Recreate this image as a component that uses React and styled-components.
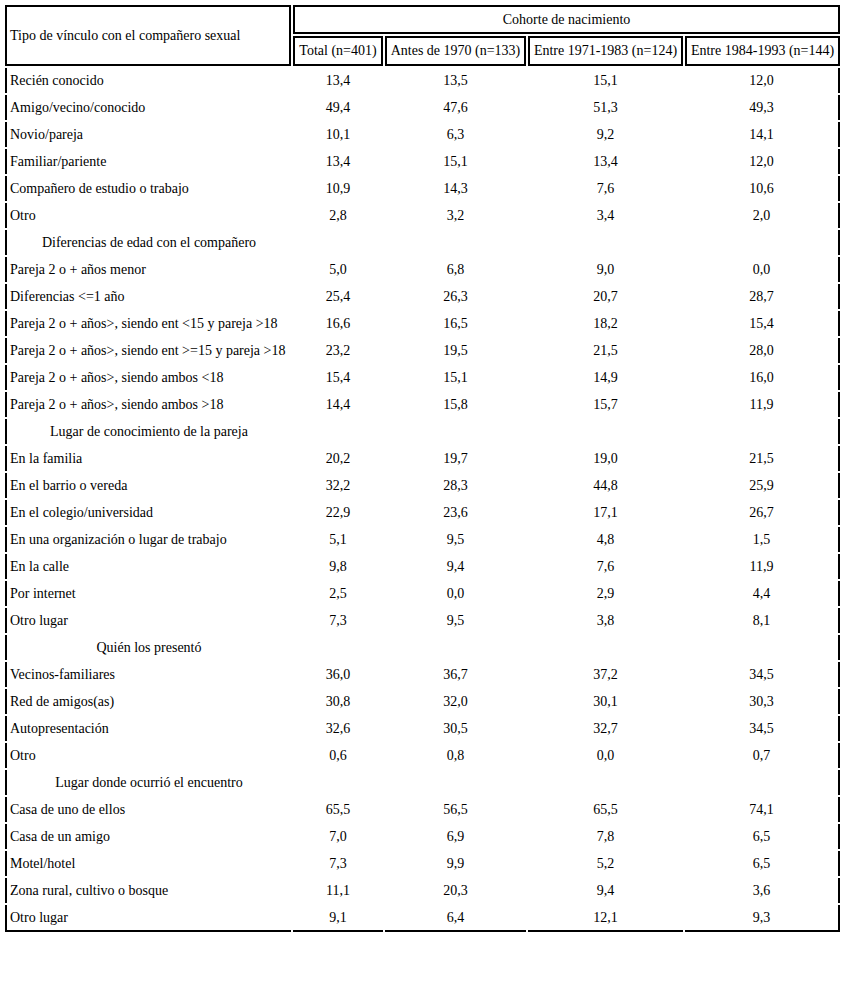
import React from "react";
import styled, { createGlobalStyle } from "styled-components";

const GlobalStyle = createGlobalStyle`
  html, body {
    margin: 0;
    padding: 0;
    background: #ffffff;
  }
  body {
    padding: 3px;
    font-family: "Liberation Serif", "Times New Roman", serif;
    font-size: 14px;
    color: #000000;
  }
`;

const Table = styled.table`
  border-collapse: separate;
  border-spacing: 2px;
  table-layout: fixed;
  width: 839px;
  font-family: "Liberation Serif", "Times New Roman", serif;
  font-size: 14px;
  line-height: 17px;
  color: #000;
`;

const HeadCell = styled.th`
  border: 2px solid #000;
  padding: 4px 3px ${(p) => (p.$sub ? "5px" : "4px")};
  font-weight: normal;
  white-space: nowrap;
  text-align: ${(p) => (p.$left ? "left" : "center")};
  vertical-align: middle;
  overflow: visible;
`;

const BodyCell = styled.td`
  padding: 4px 3px;
  white-space: nowrap;
  overflow: visible;
  text-align: ${(p) => p.$align || "center"};
  vertical-align: middle;
  border-left: ${(p) => (p.$first ? "2px solid #000" : "none")};
  border-right: ${(p) => (p.$last ? "2px solid #000" : "none")};
  border-bottom: ${(p) => (p.$bottom ? "2px solid #000" : "none")};
`;

const sections = [
  {
    rows: [
      ["Recién conocido", "13,4", "13,5", "15,1", "12,0"],
      ["Amigo/vecino/conocido", "49,4", "47,6", "51,3", "49,3"],
      ["Novio/pareja", "10,1", "6,3", "9,2", "14,1"],
      ["Familiar/pariente", "13,4", "15,1", "13,4", "12,0"],
      ["Compañero de estudio o trabajo", "10,9", "14,3", "7,6", "10,6"],
      ["Otro", "2,8", "3,2", "3,4", "2,0"],
    ],
  },
  {
    title: "Diferencias de edad con el compañero",
    rows: [
      ["Pareja 2 o + años menor", "5,0", "6,8", "9,0", "0,0"],
      ["Diferencias <=1 año", "25,4", "26,3", "20,7", "28,7"],
      ["Pareja 2 o + años>, siendo ent <15 y pareja >18", "16,6", "16,5", "18,2", "15,4"],
      ["Pareja 2 o + años>, siendo ent >=15 y pareja >18", "23,2", "19,5", "21,5", "28,0"],
      ["Pareja 2 o + años>, siendo ambos <18", "15,4", "15,1", "14,9", "16,0"],
      ["Pareja 2 o + años>, siendo ambos >18", "14,4", "15,8", "15,7", "11,9"],
    ],
  },
  {
    title: "Lugar de conocimiento de la pareja",
    rows: [
      ["En la familia", "20,2", "19,7", "19,0", "21,5"],
      ["En el barrio o vereda", "32,2", "28,3", "44,8", "25,9"],
      ["En el colegio/universidad", "22,9", "23,6", "17,1", "26,7"],
      ["En una organización o lugar de trabajo", "5,1", "9,5", "4,8", "1,5"],
      ["En la calle", "9,8", "9,4", "7,6", "11,9"],
      ["Por internet", "2,5", "0,0", "2,9", "4,4"],
      ["Otro lugar", "7,3", "9,5", "3,8", "8,1"],
    ],
  },
  {
    title: "Quién los presentó",
    rows: [
      ["Vecinos-familiares", "36,0", "36,7", "37,2", "34,5"],
      ["Red de amigos(as)", "30,8", "32,0", "30,1", "30,3"],
      ["Autopresentación", "32,6", "30,5", "32,7", "34,5"],
      ["Otro", "0,6", "0,8", "0,0", "0,7"],
    ],
  },
  {
    title: "Lugar donde ocurrió el encuentro",
    rows: [
      ["Casa de uno de ellos", "65,5", "56,5", "65,5", "74,1"],
      ["Casa de un amigo", "7,0", "6,9", "7,8", "6,5"],
      ["Motel/hotel", "7,3", "9,9", "5,2", "6,5"],
      ["Zona rural, cultivo o bosque", "11,1", "20,3", "9,4", "3,6"],
      ["Otro lugar", "9,1", "6,4", "12,1", "9,3"],
    ],
  },
];

const allRows = [];
sections.forEach((s) => {
  if (s.title) allRows.push({ title: s.title });
  s.rows.forEach((r) => allRows.push({ cells: r }));
});

export default function App() {
  return (
    <>
      <GlobalStyle />
      <Table>
        <colgroup>
          <col style={{ width: 286 }} />
          <col style={{ width: 90 }} />
          <col style={{ width: 141 }} />
          <col style={{ width: 155 }} />
          <col style={{ width: 155 }} />
        </colgroup>
        <thead>
          <tr>
            <HeadCell rowSpan={2} $left>
              Tipo de vínculo con el compañero sexual
            </HeadCell>
            <HeadCell colSpan={4}>Cohorte de nacimiento</HeadCell>
          </tr>
          <tr>
            <HeadCell $sub>Total (n=401)</HeadCell>
            <HeadCell $sub>Antes de 1970 (n=133)</HeadCell>
            <HeadCell $sub>Entre 1971-1983 (n=124)</HeadCell>
            <HeadCell $sub>Entre 1984-1993 (n=144)</HeadCell>
          </tr>
        </thead>
        <tbody>
          {allRows.map((row, i) => {
            const bottom = i === allRows.length - 1;
            if (row.title) {
              return (
                <tr key={i}>
                  <BodyCell $first $bottom={bottom}>
                    {row.title}
                  </BodyCell>
                  <BodyCell $bottom={bottom} />
                  <BodyCell $bottom={bottom} />
                  <BodyCell $bottom={bottom} />
                  <BodyCell $last $bottom={bottom} />
                </tr>
              );
            }
            return (
              <tr key={i}>
                {row.cells.map((c, j) => (
                  <BodyCell
                    key={j}
                    $first={j === 0}
                    $last={j === 4}
                    $bottom={bottom}
                    $align={j === 0 ? "left" : "center"}
                  >
                    {c}
                  </BodyCell>
                ))}
              </tr>
            );
          })}
        </tbody>
      </Table>
    </>
  );
}
